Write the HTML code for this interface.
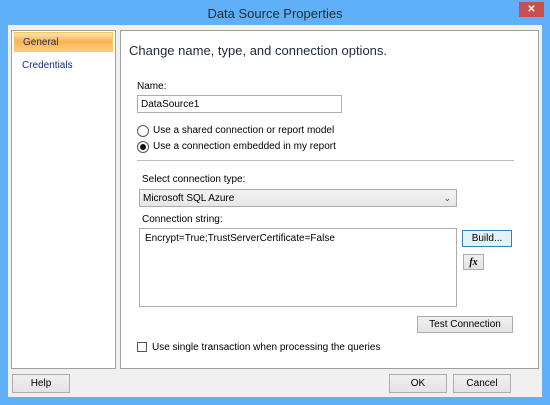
<!DOCTYPE html>
<html><head><style>
*{box-sizing:border-box;margin:0;padding:0}
body{width:550px;height:405px;background:#5fb0f7;font-family:"Liberation Sans",sans-serif;font-size:10px;color:#000;position:relative;overflow:hidden}
.a{position:absolute}
.btn{position:absolute;background:linear-gradient(#f0f0f0,#e3e3e3);border:1px solid #acacac;text-align:center;line-height:17px;font-size:10px}
.tb{position:absolute;background:#fff;border:1px solid #abadb3}
</style></head><body>
<div class="a" style="left:0;top:0;width:550px;height:25px;text-align:center;line-height:27px;font-size:13px;color:#1e2a3a">Data Source Properties</div>
<div class="a" style="left:519px;top:2px;width:25px;height:15px;background:#c75050;color:#fff;text-align:center;line-height:15px;font-size:10px;font-weight:bold">✕</div>
<div class="a" style="left:8px;top:25px;width:534px;height:372px;background:#f0f0f0"></div>
<div class="a" style="left:11px;top:30px;width:105px;height:339px;background:#fff;border:1px solid #a0a0a0"></div>
<div class="a" style="left:14px;top:32px;width:99px;height:20px;background:linear-gradient(#fde3b0,#f9b255 50%,#fbd27e);border:1px solid #f3c85e;line-height:19px;padding-left:8px;color:#1e2a5a">General</div>
<div class="a" style="left:22px;top:60px;color:#1e2a7a">Credentials</div>
<div class="a" style="left:120px;top:30px;width:419px;height:339px;background:#fff;border:1px solid #a0a0a0"></div>
<div class="a" style="left:129px;top:43px;font-size:13px;color:#1e2a3a">Change name, type, and connection options.</div>
<div class="a" style="left:137px;top:81px">Name:</div>
<div class="tb" style="left:137px;top:95px;width:205px;height:18px;padding-left:3px;line-height:17px">DataSource1</div>
<div class="a" style="left:137px;top:125px;width:12px;height:12px;border:1px solid #555;border-radius:50%;background:#fff"></div>
<div class="a" style="left:153px;top:125px">Use a shared connection or report model</div>
<div class="a" style="left:137px;top:141px;width:12px;height:12px;border:1px solid #555;border-radius:50%;background:#fff"><div class="a" style="left:2px;top:2px;width:6px;height:6px;border-radius:50%;background:#111"></div></div>
<div class="a" style="left:153px;top:141px">Use a connection embedded in my report</div>
<div class="a" style="left:137px;top:160px;width:377px;height:1px;background:#bbb"></div>
<div class="a" style="left:142px;top:174px">Select connection type:</div>
<div class="a" style="left:139px;top:189px;width:318px;height:18px;background:linear-gradient(#f3f3f3,#e6e6e6);border:1px solid #acacac;padding-left:3px;line-height:17px">Microsoft SQL Azure<span style="position:absolute;right:5px;top:0;font-size:9px;color:#444">&#8964;</span></div>
<div class="a" style="left:142px;top:214px">Connection string:</div>
<div class="tb" style="left:139px;top:228px;width:318px;height:79px;padding:4px 5px">Encrypt=True;TrustServerCertificate=False</div>
<div class="btn" style="left:462px;top:230px;width:50px;height:17px;line-height:16px;background:#e5f1fb;border-color:#3c7fb1">Build...</div>
<div class="btn" style="left:463px;top:254px;width:21px;height:16px;line-height:15px;font-family:'Liberation Serif',serif;font-style:italic;font-weight:bold">fx</div>
<div class="btn" style="left:417px;top:316px;width:96px;height:17px;line-height:16px">Test Connection</div>
<div class="a" style="left:137px;top:342px;width:10px;height:10px;border:1px solid #555;background:#fff"></div>
<div class="a" style="left:152px;top:342px">Use single transaction when processing the queries</div>
<div class="btn" style="left:12px;top:374px;width:58px;height:19px">Help</div>
<div class="btn" style="left:389px;top:374px;width:58px;height:19px">OK</div>
<div class="btn" style="left:453px;top:374px;width:58px;height:19px">Cancel</div>
</body></html>
